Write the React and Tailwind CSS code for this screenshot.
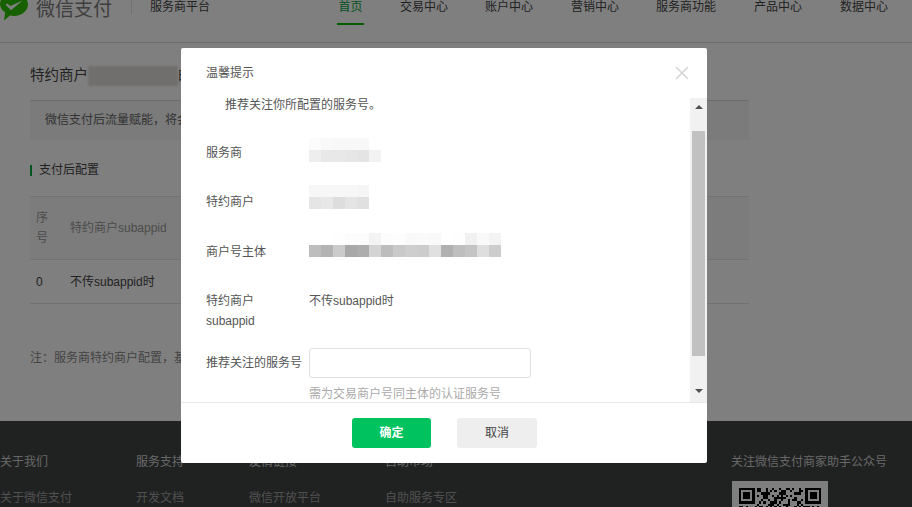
const FONT = "font-['Liberation_Sans','Noto_Sans_CJK_SC',sans-serif]";

function Logo() {
  return (
    <svg width="29" height="21" viewBox="0 0 29 21" className="shrink-0">
      <path d="M14 -7C6.3 -7 0 -2 0 4c0 3.4 2 6.5 5.2 8.6L4 20.5l6-5c1.3.3 2.6.4 4 .4 7.7 0 14-5.2 14-11.4S21.7 -7 14 -7z" fill="#2dc100" />
      <path d="M5.5 4.5l1.6-1 3.4 2.6L22.5 0.5 11 10.2z" fill="#fff" />
    </svg>
  );
}

function Blocks({ rows }) {
  return (
    <div className="flex flex-col">
      {rows.map((row, i) => (
        <div key={i} className="flex">
          {row.map((c, j) => (
            <div key={j} className="w-3 h-3" style={{ backgroundColor: c }} />
          ))}
        </div>
      ))}
    </div>
  );
}

function Qr() {
  const n = 37;
  const cells = [];
  for (let y = 0; y < n; y++) {
    for (let x = 0; x < n; x++) {
      const inFinder = (x < 8 && y < 8) || (x > 28 && y < 8) || (x < 8 && y > 28);
      if (!inFinder && ((x * 7 + y * 13 + ((x * y) % 5)) % 3 === 0 || (x ^ y) % 7 === 1)) {
        cells.push(<rect key={x + "-" + y} x={x} y={y} width="1" height="1" fill="#000" />);
      }
    }
  }
  const finder = (x, y) => (
    <g>
      <rect x={x} y={y} width="7" height="7" fill="#000" />
      <rect x={x + 1} y={y + 1} width="5" height="5" fill="#fff" />
      <rect x={x + 2} y={y + 2} width="3" height="3" fill="#000" />
    </g>
  );
  return (
    <div className="bg-white w-24 h-24 p-[7px]">
      <svg width="82" height="82" viewBox="0 0 37 37" shapeRendering="crispEdges">
        {cells}
        {finder(0, 0)}
        {finder(30, 0)}
        {finder(0, 30)}
      </svg>
    </div>
  );
}

const nav = [
  ["首页", "w-[27px] text-[#07a83f] border-b-2 border-[#09bb07]", "mr-[36px]"],
  ["交易中心", "", "mr-[37px]"],
  ["账户中心", "", "mr-[38px]"],
  ["营销中心", "", "mr-[37px]"],
  ["服务商功能", "", "mr-[38px]"],
  ["产品中心", "", "mr-[38px]"],
  ["数据中心", "", ""],
];

const footer = [
  ["关于我们", "关于微信支付", "w-[136px]"],
  ["服务支持", "开发文档", "w-[113px]"],
  ["友情链接", "微信开放平台", "w-[136px]"],
  ["自助市场", "自助服务专区", "w-[346px]"],
];

function Row({ label, children, className, labelClass = "" }) {
  return (
    <div className={"flex items-start pl-[25px] " + className}>
      <div className={"w-[103px] shrink-0 text-[#555] leading-5 " + labelClass}>{label}</div>
      <div className="text-[#555] leading-5">{children}</div>
    </div>
  );
}

export default function App() {
  return (
    <div className={"relative h-[507px] w-[912px] overflow-hidden bg-white text-xs text-[#444] " + FONT}>
      {/* page */}
      <header className="h-[43px] border-b border-[#d9d9d9] flex items-start">
        <Logo />
        <span className="ml-[7px] -mt-[3px] text-[19px] leading-[26px] text-[#7d7d7d] w-[76px]">微信支付</span>
        <span className="ml-[19px] h-[14px] w-px bg-[#e5e5e5]" />
        <span className="ml-[18px] leading-[14px] w-[60px]">服务商平台</span>
        <nav className="ml-[127px] flex items-start">
          {nav.map(([t, c, m]) => (
            <span key={t} className={"h-[25px] leading-[14px] text-center " + c + " " + m}>{t}</span>
          ))}
        </nav>
      </header>

      <main className="h-[378px] px-[30px] pt-[23px]">
        <h1 className="h-5 flex items-center text-[14.5px] font-normal">
          特约商户
          <span className="w-[90px] h-[20px] bg-[#e2dfdb] blur-[1px]" />
          的
        </h1>
        <div className="mt-[14px] h-[40px] w-[719px] border-t border-[#d9d9d9] bg-[#f6f6f6] pl-[15px] leading-[38px] text-[#666]">
          微信支付后流量赋能，将会为商户带来更多关注
        </div>
        <div className="mt-[24px] h-[12px] flex items-center">
          <span className="w-[2px] h-[11px] bg-[#09a83f] mr-[7px]" />
          <span>支付后配置</span>
        </div>
        <div className="mt-[20px] w-[719px]">
          <div className="h-[64px] flex items-center bg-[#f8f8f8] border-t border-b border-[#e5e5e5] text-[#999]">
            <div className="w-[40px] pl-[6px] leading-5">序<br />号</div>
            <div>特约商户subappid</div>
          </div>
          <div className="h-[44px] flex items-center border-b border-[#e5e5e5]">
            <div className="w-[40px] pl-[6px]">0</div>
            <div>不传subappid时</div>
          </div>
        </div>
        <p className="mt-[46px] text-[#888] whitespace-nowrap">注：服务商特约商户配置，基于商户号主体</p>
      </main>

      <footer className="h-[86px] bg-[#404444] flex">
        {footer.map(([h, l, w]) => (
          <div key={h} className={"shrink-0 pt-[34px] " + w}>
            <div className="leading-[14px] text-[#d0d0d0]">{h}</div>
            <div className="mt-[22px] leading-[14px] text-[#a0a0a0]">{l}</div>
          </div>
        ))}
        <div className="pt-[34px]">
          <div className="leading-[14px] text-[#d0d0d0] whitespace-nowrap">关注微信支付商家助手公众号</div>
          <div className="mt-[12px] ml-px"><Qr /></div>
        </div>
      </footer>

      {/* overlay + dialog */}
      <div className="absolute inset-0 bg-black/50 pt-[48px] pl-[181px]">
        <div className="w-[526px] h-[415px] bg-white rounded-[2px] flex flex-col">
          <div className="h-[50px] shrink-0 flex items-center justify-between pl-[25px] pr-[18px]">
            <span className="text-[#555]">温馨提示</span>
            <svg width="14" height="14" viewBox="0 0 14 14">
              <path d="M1 1l12 12M13 1L1 13" stroke="#d4d4d4" strokeWidth="1.5" fill="none" />
            </svg>
          </div>

          <div className="flex h-[305px] shrink-0 border-b border-[#e9e9e9]">
            <div className="w-[509px] overflow-hidden">
              <p className="pl-[44px] mt-[-1px] leading-[16px] text-[#555]">推荐关注你所配置的服务号。</p>
              <Row label="服务商" labelClass="pt-[5px]" className="mt-[25px]">
                <Blocks rows={[
                  ["#fbfbfb", "#f9f9f9", "#f8f8f8", "#f8f8f8", "#f8f8f8", "#fff"],
                  ["#eeeeee", "#e8e8e8", "#e8e8e8", "#e6e6e6", "#e4e4e4", "#f2f2f2"],
                ]} />
              </Row>
              <Row label="特约商户" labelClass="pt-[7px]" className="mt-[22px]">
                <Blocks rows={[
                  ["#f7f7f7", "#f7f7f7", "#f7f7f7", "#f7f7f7", "#f5f5f5"],
                  ["#e5e5e5", "#e8e8e8", "#dddddd", "#e4e4e4", "#e0e0e0"],
                ]} />
              </Row>
              <Row label="商户号主体" labelClass="pt-[9px]" className="mt-[21px]">
                <Blocks rows={[
                  ["#fff", "#fff", "#fefefe", "#fcfcfc", "#fcfcfc", "#f3f3f3", "#fcfcfc", "#fdfdfd", "#f9f9f9", "#fafafa", "#f9f9f9", "#fff", "#fefefe", "#f1f1f1", "#f9f9f9", "#f3f3f3"],
                  ["#bdbdbd", "#b3b3b3", "#cbcbcb", "#a8a8a8", "#adadad", "#d4d4d4", "#bdbdbd", "#c9c9c9", "#cecece", "#cccccc", "#e0e0e0", "#b0b0b0", "#bebebe", "#c4c4c4", "#dedede", "#cdcdcd"],
                ]} />
              </Row>
              <Row label={<>特约商户<br />subappid</>} className="mt-[29px]">
                不传subappid时
              </Row>
              <div className="flex pl-[25px] mt-[17px] items-center">
                <div className="w-[103px] shrink-0 text-[#555] whitespace-nowrap">推荐关注的服务号</div>
                <input className="w-[222px] h-[30px] border border-[#e1e1e1] rounded-[3px] outline-none" />
              </div>
              <div className="pl-[128px] mt-[8px] leading-[16px] text-[#aaa]">需为交易商户号同主体的认证服务号</div>
            </div>
            <div className="w-[17px] bg-[#f1f1f1] flex flex-col items-center">
              <div className="h-[33px] pt-[7px] shrink-0">
                <div className="w-0 h-0 border-x-[4px] border-x-transparent border-b-[4px] border-b-[#505050]" />
              </div>
              <div className="w-[13px] h-[225px] bg-[#c1c1c1] shrink-0" />
              <div className="mt-[33px]">
                <div className="w-0 h-0 border-x-[4px] border-x-transparent border-t-[4px] border-t-[#505050]" />
              </div>
            </div>
          </div>

          <div className="flex-1 flex items-start pl-[171px] pt-[15px] gap-[26px]">
            <button className="w-[79px] h-[30px] rounded-[3px] bg-[#00c25f] text-white font-bold">确定</button>
            <button className="w-[80px] h-[30px] rounded-[3px] bg-[#eeeeee] text-[#444]">取消</button>
          </div>
        </div>
      </div>
    </div>
  );
}
